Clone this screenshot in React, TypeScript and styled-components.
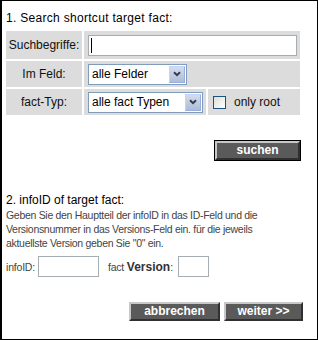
import React from "react";
import styled, { createGlobalStyle } from "styled-components";

const Global = createGlobalStyle`
  html, body { margin: 0; padding: 0; background: #fff; }
  body { font-family: "Liberation Sans", Arial, Helvetica, sans-serif; }
`;

const Frame = styled.div`
  box-sizing: border-box;
  width: 318px;
  height: 340px;
  border: 1px solid #000;
  border-left-width: 2px;
  padding: 10px 0 0 4px;
  display: flex;
  flex-direction: column;
  color: #111;
`;

const Title = styled.div<{ $spacing?: number; $mt?: number }>`
  font-size: 12px;
  line-height: 14px;
  color: #000;
  letter-spacing: ${(p) => p.$spacing ?? 0}px;
  margin-top: ${(p) => p.$mt ?? 0}px;
`;

const FormGrid = styled.div`
  display: grid;
  grid-template-columns: 76px 122px 92px;
  grid-template-rows: 28px 26px 26px;
  gap: 2px;
  margin-top: 6px;
  width: 294px;
`;

const Cell = styled.div<{ $span?: number }>`
  background: #dcdcdc;
  display: flex;
  align-items: center;
  grid-column: span ${(p) => p.$span ?? 1};
`;

const LabelCell = styled(Cell)`
  justify-content: center;
  font-size: 12px;
  color: #111;
`;

const FieldCell = styled(Cell)`
  padding-left: 4px;
`;

const CheckCell = styled(Cell)`
  padding-left: 5px;
  gap: 8px;
  font-size: 12px;
  color: #111;
`;

const TextInput = styled.input<{ $w: number }>`
  box-sizing: border-box;
  width: ${(p) => p.$w}px;
  height: 21px;
  border: 1px solid #a5acb2;
  background: #fff;
  margin: 0;
  padding: 0 2px;
  font: 12px "Liberation Sans", Arial, sans-serif;
  outline: none;
  caret-color: #000;
`;

const Caret = styled.span`
  width: 1px;
  height: 15px;
  margin-left: 2px;
  background: #000;
`;

const FakeInput = styled.div<{ $w: number }>`
  box-sizing: border-box;
  width: ${(p) => p.$w}px;
  height: 21px;
  border: 1px solid #a5acb2;
  background: #fff;
  display: flex;
  align-items: center;
`;

const SelectBox = styled.div<{ $w: number }>`
  box-sizing: border-box;
  width: ${(p) => p.$w}px;
  height: 21px;
  border: 1px solid #7f9db9;
  background: #fff;
  display: flex;
  align-items: stretch;
`;

const SelectValue = styled.span`
  flex: 1;
  display: flex;
  align-items: center;
  padding-left: 3px;
  font-size: 12px;
  color: #000;
  white-space: nowrap;
  overflow: hidden;
`;

const SelectArrow = styled.span`
  box-sizing: border-box;
  width: 16px;
  margin: 1px;
  border: 1px solid #c3d3fd;
  border-right-color: #97aee2;
  border-bottom-color: #97aee2;
  background: linear-gradient(#d4dcec, #b0bcd4);
  display: flex;
  align-items: center;
  justify-content: center;
`;

const Check = styled.span`
  box-sizing: border-box;
  width: 13px;
  height: 13px;
  border: 1px solid #1c5180;
  background: linear-gradient(135deg, #dcdcd7, #fff);
`;

const ButtonRow = styled.div<{ $mt: number; $mr: number }>`
  display: flex;
  justify-content: flex-end;
  gap: 4px;
  margin-top: ${(p) => p.$mt}px;
  margin-right: ${(p) => p.$mr}px;
`;

const Button = styled.button<{ $w: number; $outlined?: boolean }>`
  box-sizing: border-box;
  width: ${(p) => p.$w}px;
  height: 19px;
  margin: 0;
  padding: 0 0 1px;
  border: 2px solid;
  border-color: #c8c8c8 #303030 #303030 #c8c8c8;
  background: #5a5a5a;
  color: #fff;
  font: bold 12px "Liberation Sans", Arial, sans-serif;
  outline: ${(p) => (p.$outlined ? "1px solid #000" : "none")};
  outline-offset: 0;
`;

const Description = styled.div`
  margin-top: 1px;
  font-size: 10.5px;
  letter-spacing: -0.3px;
  line-height: 14px;
  color: #444;
  width: 275px;
`;

const IdRow = styled.div`
  display: flex;
  align-items: center;
  margin-top: 6px;
  font-size: 10.5px;
  letter-spacing: -0.2px;
  color: #444;
`;

const IdLabel = styled.span<{ $ml?: number; $mr?: number }>`
  margin-left: ${(p) => p.$ml ?? 0}px;
  margin-right: ${(p) => p.$mr ?? 5}px;
  b {
    color: #333;
    font-size: 12px;
    letter-spacing: 0;
  }
`;

const Chevron = () => (
  <svg width="8" height="6" viewBox="0 0 8 6">
    <path d="M1 1.2 L4 4.2 L7 1.2" fill="none" stroke="#2f3d5a" strokeWidth="2" />
  </svg>
);

export default function App() {
  return (
    <>
      <Global />
      <Frame>
        <Title $spacing={0.3}>1. Search shortcut target fact:</Title>
        <FormGrid>
          <LabelCell>Suchbegriffe:</LabelCell>
          <FieldCell $span={2}>
            <FakeInput $w={209}>
              <Caret />
            </FakeInput>
          </FieldCell>
          <LabelCell>Im Feld:</LabelCell>
          <FieldCell $span={2}>
            <SelectBox $w={99}>
              <SelectValue>alle Felder</SelectValue>
              <SelectArrow>
                <Chevron />
              </SelectArrow>
            </SelectBox>
          </FieldCell>
          <LabelCell>fact-Typ:</LabelCell>
          <FieldCell>
            <SelectBox $w={115}>
              <SelectValue>alle fact Typen</SelectValue>
              <SelectArrow>
                <Chevron />
              </SelectArrow>
            </SelectBox>
          </FieldCell>
          <CheckCell>
            <Check />
            only root
          </CheckCell>
        </FormGrid>
        <ButtonRow $mt={26} $mr={17}>
          <Button $w={85} $outlined>
            suchen
          </Button>
        </ButtonRow>
        <Title $mt={33}>2. infoID of target fact:</Title>
        <Description>
          Geben Sie den Hauptteil der infoID in das ID-Feld und die Versionsnummer in das
          Versions-Feld ein. für die jeweils aktuellste Version geben Sie "0" ein.
        </Description>
        <IdRow>
          <IdLabel $mr={3}>infoID:</IdLabel>
          <TextInput $w={61} />
          <IdLabel $ml={9}>
            fact <b>Version</b>:
          </IdLabel>
          <TextInput $w={31} />
        </IdRow>
        <ButtonRow $mt={25} $mr={14}>
          <Button $w={91}>abbrechen</Button>
          <Button $w={79}>weiter &gt;&gt;</Button>
        </ButtonRow>
      </Frame>
    </>
  );
}
